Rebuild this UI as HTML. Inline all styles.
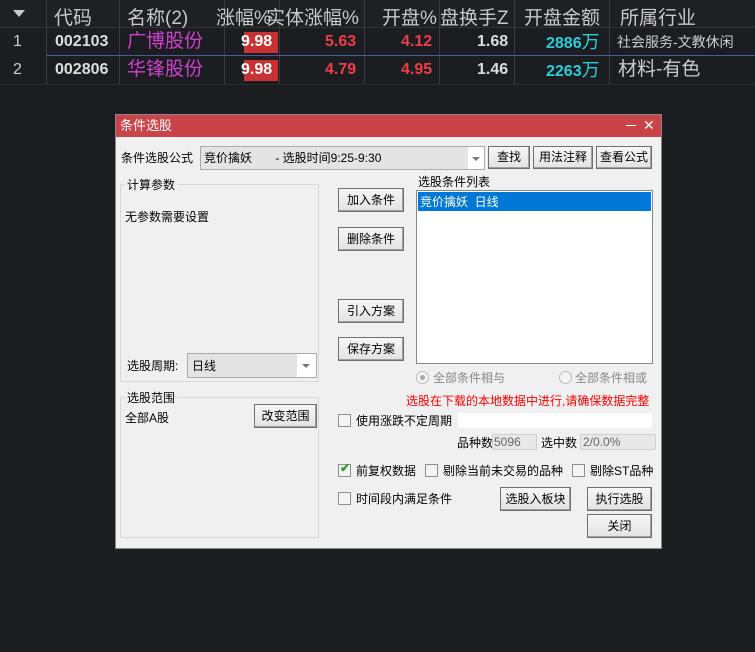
<!DOCTYPE html>
<html><head><meta charset="utf-8"><style>
*{margin:0;padding:0;box-sizing:border-box}
body{width:755px;height:652px;background:#1c1d21;position:relative;overflow:hidden;font-family:"Liberation Sans","Noto Sans CJK SC",sans-serif}
.a{position:absolute;white-space:nowrap}
.h{font-size:19px;color:#c8c8c8;top:3px}
.vs{position:absolute;width:1px;background:#3a3b40;top:0;height:84px}
.r{font-size:16px;font-weight:bold;line-height:22px}
.n{font-size:19px;line-height:22px}
.d{font-size:12px;color:#000;line-height:14px}
.btn{position:absolute;background:linear-gradient(#f6f6f6,#e3e3e3);border:1px solid #707070;box-shadow:inset -1px -1px 0 #a0a0a0;font-size:12px;text-align:center;color:#000;white-space:nowrap}
.grp{position:absolute;border:1px solid #d8d8d8}
.cb{position:absolute;width:13px;height:13px;border:1px solid #8f8f8f;background:#f4f4f4}
.rd{position:absolute;width:13px;height:13px;border:1px solid #bcbcbc;border-radius:50%;background:#f4f4f4}
</style></head><body>
<div class="a" style="left:0;top:0;width:755px;height:28px;background:#1f2024;border-bottom:1px solid #333"></div>
<div class="a" style="left:13px;top:10px;width:0;height:0;border-left:6px solid transparent;border-right:6px solid transparent;border-top:7px solid #c8c8c8"></div>
<div class="vs" style="left:46px"></div><div class="vs" style="left:119px"></div><div class="vs" style="left:224px"></div><div class="vs" style="left:279px"></div><div class="vs" style="left:364px"></div><div class="vs" style="left:439px"></div><div class="vs" style="left:514px"></div><div class="vs" style="left:609px"></div>
<div class="a h" style="left:54px">代码</div>
<div class="a h" style="left:127px">名称(2)</div>
<div class="a h" style="left:216px">涨幅%</div>
<div class="a h" style="left:266px">实体涨幅%</div>
<div class="a h" style="left:382px">开盘%</div>
<div class="a h" style="left:440px">盘换手Z</div>
<div class="a h" style="left:524px">开盘金额</div>
<div class="a h" style="left:620px">所属行业</div>
<div class="a" style="left:46px;top:55px;width:709px;height:1px;background:#4a5a9a"></div>
<div class="a" style="left:0;top:84px;width:755px;height:1px;background:#2a2b30"></div>
<!-- row1 -->
<div class="a r" style="left:13px;top:31px;color:#ccc;font-weight:normal">1</div>
<div class="a r" style="left:55px;top:31px;color:#ddd">002103</div>
<div class="a n" style="left:127px;top:31px;color:#d040d0">广博股份</div>
<div class="a" style="left:244px;top:32px;width:34px;height:21px;background:#c83232"></div>
<div class="a r" style="left:241px;top:31px;color:#fff">9.98</div>
<div class="a r" style="left:325px;top:31px;color:#f03c4a">5.63</div>
<div class="a r" style="left:401px;top:31px;color:#f03c4a">4.12</div>
<div class="a r" style="left:477px;top:31px;color:#ddd">1.68</div>
<div class="a r" style="left:546px;top:31px;color:#2ad0d8">2886<span style="font-weight:normal;font-size:18px">万</span></div>
<div class="a" style="left:617px;top:33px;font-size:14px;color:#ccc;line-height:18px">社会服务-文教休闲</div>
<!-- row2 -->
<div class="a r" style="left:13px;top:59px;color:#ccc;font-weight:normal">2</div>
<div class="a r" style="left:55px;top:59px;color:#ddd">002806</div>
<div class="a n" style="left:127px;top:59px;color:#d040d0">华锋股份</div>
<div class="a" style="left:244px;top:60px;width:34px;height:21px;background:#c83232"></div>
<div class="a r" style="left:241px;top:59px;color:#fff">9.98</div>
<div class="a r" style="left:325px;top:59px;color:#f03c4a">4.79</div>
<div class="a r" style="left:401px;top:59px;color:#f03c4a">4.95</div>
<div class="a r" style="left:477px;top:59px;color:#ddd">1.46</div>
<div class="a r" style="left:546px;top:59px;color:#2ad0d8">2263<span style="font-weight:normal;font-size:18px">万</span></div>
<div class="a n" style="left:618px;top:59px;color:#ccc">材料-有色</div>

<!-- dialog -->
<div class="a" style="left:115px;top:114px;width:547px;height:435px;background:#f0f0f0;border:1px solid #888"></div>
<div class="a" style="left:116px;top:115px;width:545px;height:22px;background:#c94348"></div>
<div class="a" style="left:120px;top:118px;font-size:13px;color:#fff;line-height:16px">条件选股</div>
<div class="a" style="left:626px;top:125px;width:10px;height:1px;background:#fff"></div>
<div class="a" style="left:643px;top:117px;font-size:14px;color:#fff;line-height:16px">✕</div>

<div class="a d" style="left:121px;top:151px">条件选股公式</div>
<div class="a" style="left:200px;top:146px;width:285px;height:24px;background:#e4e4e4;border:1px solid #aaa"></div>
<div class="a" style="left:468px;top:147px;width:16px;height:22px;background:#fff"></div>
<div class="a" style="left:472px;top:157px;border-left:4px solid transparent;border-right:4px solid transparent;border-top:4px solid #777"></div>
<div class="a d" style="left:204px;top:151px">竞价擒妖&nbsp;&nbsp;&nbsp;&nbsp;&nbsp;&nbsp;&nbsp;- 选股时间9:25-9:30</div>
<div class="btn" style="left:488px;top:146px;width:42px;height:23px;line-height:21px">查找</div>
<div class="btn" style="left:533px;top:146px;width:60px;height:23px;line-height:21px">用法注释</div>
<div class="btn" style="left:596px;top:146px;width:56px;height:23px;line-height:21px">查看公式</div>

<div class="grp" style="left:120px;top:184px;width:199px;height:198px"></div>
<div class="a d" style="left:125px;top:178px;background:#f0f0f0;padding:0 2px">计算参数</div>
<div class="a d" style="left:125px;top:210px">无参数需要设置</div>
<div class="a d" style="left:127px;top:359px">选股周期:</div>
<div class="a" style="left:187px;top:353px;width:130px;height:25px;background:#e4e4e4;border:1px solid #aaa"></div>
<div class="a" style="left:297px;top:354px;width:19px;height:23px;background:#fff"></div>
<div class="a" style="left:302px;top:364px;border-left:4px solid transparent;border-right:4px solid transparent;border-top:4px solid #777"></div>
<div class="a d" style="left:192px;top:359px">日线</div>

<div class="grp" style="left:120px;top:397px;width:199px;height:141px"></div>
<div class="a d" style="left:125px;top:391px;background:#f0f0f0;padding:0 2px">选股范围</div>
<div class="a d" style="left:125px;top:411px">全部A股</div>
<div class="btn" style="left:254px;top:404px;width:63px;height:24px;line-height:22px">改变范围</div>

<div class="btn" style="left:338px;top:188px;width:66px;height:24px;line-height:22px">加入条件</div>
<div class="btn" style="left:338px;top:227px;width:66px;height:24px;line-height:22px">删除条件</div>
<div class="btn" style="left:338px;top:299px;width:66px;height:24px;line-height:22px">引入方案</div>
<div class="btn" style="left:338px;top:337px;width:66px;height:24px;line-height:22px">保存方案</div>

<div class="a d" style="left:418px;top:175px">选股条件列表</div>
<div class="a" style="left:416px;top:190px;width:237px;height:174px;background:#fff;border:1px solid #888"></div>
<div class="a" style="left:418px;top:192px;width:233px;height:19px;background:#0078d7"></div>
<div class="a d" style="left:420px;top:195px;color:#fff">竞价擒妖&nbsp;&nbsp;日线</div>

<div class="rd" style="left:416px;top:371px"></div>
<div class="a" style="left:420px;top:375px;width:5px;height:5px;border-radius:50%;background:#aaa"></div>
<div class="a d" style="left:433px;top:371px;color:#888">全部条件相与</div>
<div class="rd" style="left:559px;top:371px"></div>
<div class="a d" style="left:575px;top:371px;color:#888">全部条件相或</div>

<div class="a d" style="left:406px;top:394px;color:#ff0000">选股在下载的本地数据中进行,请确保数据完整</div>

<div class="cb" style="left:338px;top:414px"></div>
<div class="a d" style="left:356px;top:414px">使用涨跌不定周期</div>
<div class="a" style="left:458px;top:413px;width:194px;height:15px;background:#fff"></div>

<div class="a d" style="left:457px;top:436px">品种数</div>
<div class="a" style="left:492px;top:434px;width:45px;height:16px;background:#e8e8e8;border:1px solid #d0d0d0;font-size:12px;color:#666;padding-left:1px;line-height:14px">5096</div>
<div class="a d" style="left:541px;top:436px">选中数</div>
<div class="a" style="left:580px;top:434px;width:76px;height:16px;background:#e8e8e8;border:1px solid #d0d0d0;font-size:12px;color:#666;padding-left:2px;line-height:14px">2/0.0%</div>

<div class="cb" style="left:338px;top:464px"></div>
<div class="a" style="left:340px;top:461px;font-size:12px;color:#2a9a2a;font-weight:bold">✔</div>
<div class="a d" style="left:356px;top:464px">前复权数据</div>
<div class="cb" style="left:425px;top:464px"></div>
<div class="a d" style="left:443px;top:464px">剔除当前未交易的品种</div>
<div class="cb" style="left:572px;top:464px"></div>
<div class="a d" style="left:590px;top:464px">剔除ST品种</div>

<div class="cb" style="left:338px;top:492px"></div>
<div class="a d" style="left:356px;top:492px">时间段内满足条件</div>
<div class="btn" style="left:500px;top:487px;width:71px;height:24px;line-height:22px">选股入板块</div>
<div class="btn" style="left:587px;top:487px;width:65px;height:24px;line-height:22px">执行选股</div>
<div class="btn" style="left:587px;top:514px;width:65px;height:24px;line-height:22px">关闭</div>
</body></html>
